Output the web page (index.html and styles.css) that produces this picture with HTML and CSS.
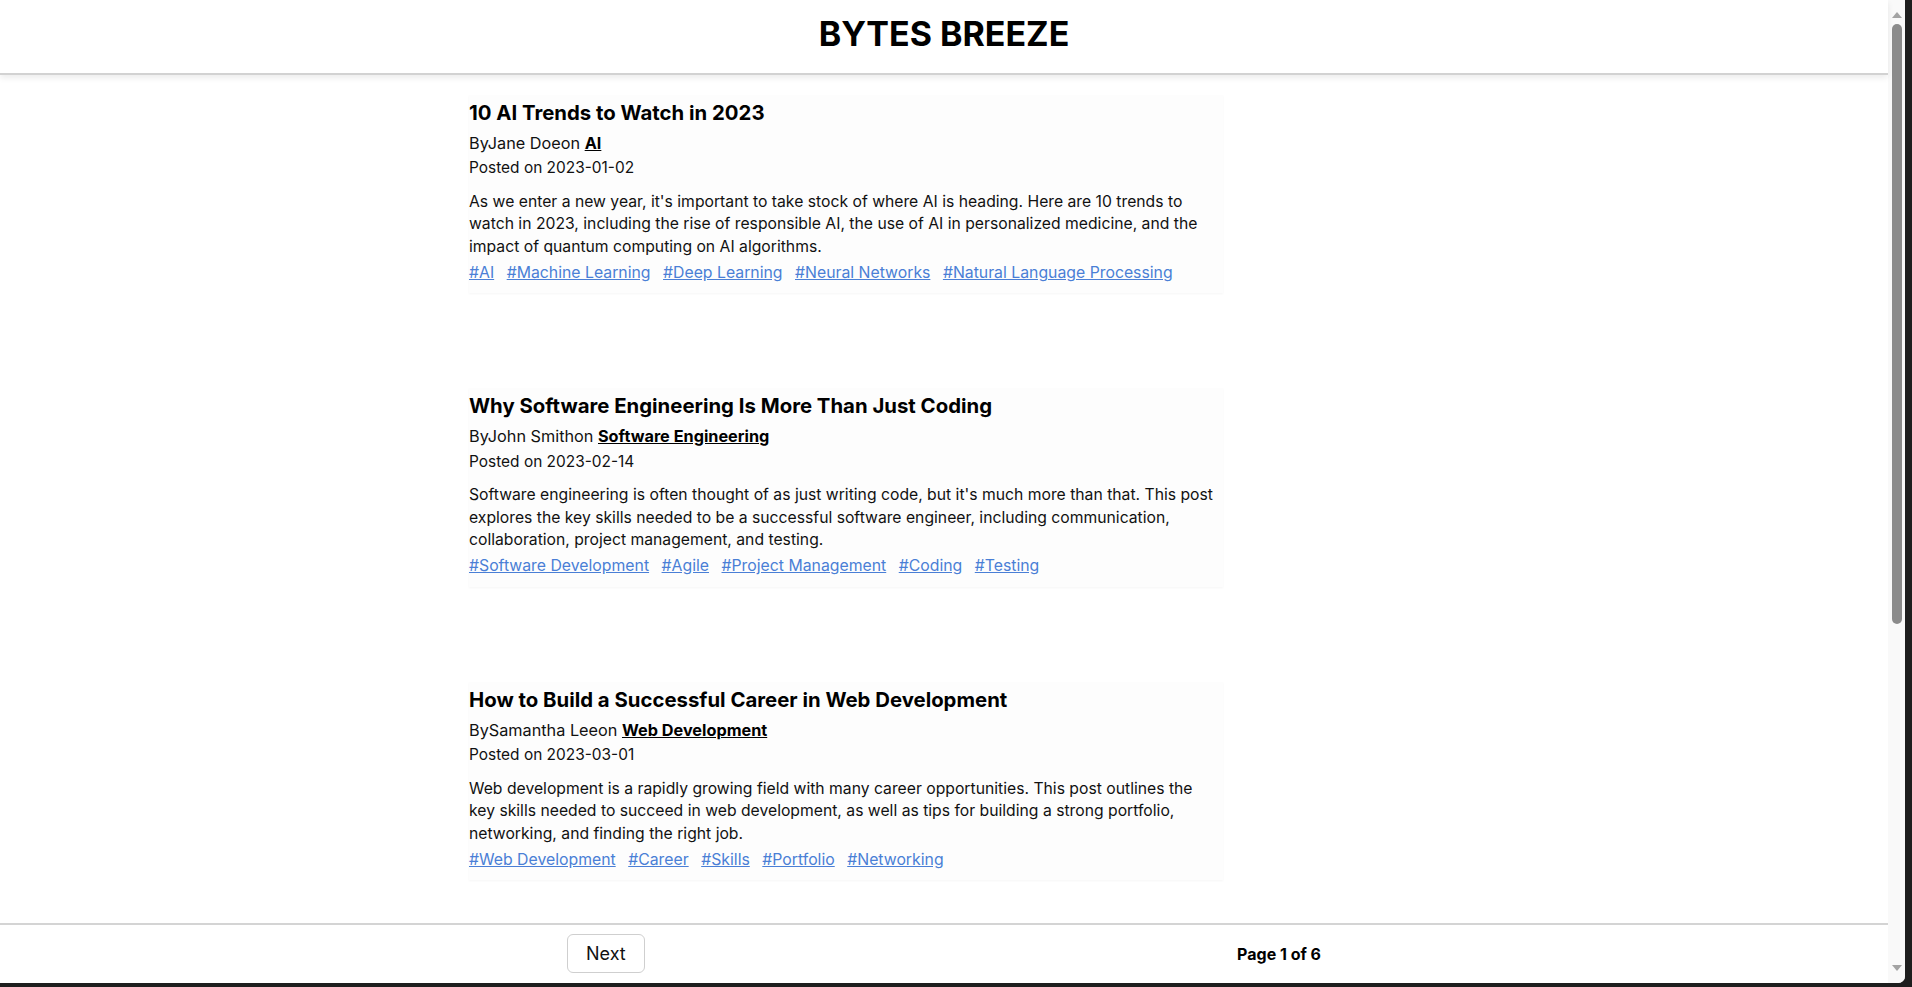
FILE: index.html
```html
<!DOCTYPE html>
<html lang="en">
<head>
<meta charset="utf-8">
<title>Bytes Breeze</title>
<link rel="stylesheet" href="styles.css">
</head>
<body>
<div class="window">
  <div class="page">
    <header class="site-header">
      <h1 class="site-title">BYTES BREEZE</h1>
    </header>
    <main class="posts">
      <article class="post">
        <h2 class="post-title">10 AI Trends to Watch in 2023</h2>
        <div class="post-meta">ByJane Doeon <a class="category" href="#">AI</a></div>
        <div class="post-date">Posted on 2023-01-02</div>
        <p class="post-body">As we enter a new year, it's important to take stock of where AI is heading. Here are 10 trends to watch in 2023, including the rise of responsible AI, the use of AI in personalized medicine, and the impact of quantum computing on AI algorithms.</p>
        <div class="tags">
          <a href="#">#AI</a>
          <a href="#">#Machine Learning</a>
          <a href="#">#Deep Learning</a>
          <a href="#">#Neural Networks</a>
          <a href="#">#Natural Language Processing</a>
        </div>
      </article>
      <article class="post">
        <h2 class="post-title">Why Software Engineering Is More Than Just Coding</h2>
        <div class="post-meta">ByJohn Smithon <a class="category" href="#">Software Engineering</a></div>
        <div class="post-date">Posted on 2023-02-14</div>
        <p class="post-body">Software engineering is often thought of as just writing code, but it's much more than that. This post explores the key skills needed to be a successful software engineer, including communication, collaboration, project management, and testing.</p>
        <div class="tags">
          <a href="#">#Software Development</a>
          <a href="#">#Agile</a>
          <a href="#">#Project Management</a>
          <a href="#">#Coding</a>
          <a href="#">#Testing</a>
        </div>
      </article>
      <article class="post">
        <h2 class="post-title">How to Build a Successful Career in Web Development</h2>
        <div class="post-meta">BySamantha Leeon <a class="category" href="#">Web Development</a></div>
        <div class="post-date">Posted on 2023-03-01</div>
        <p class="post-body">Web development is a rapidly growing field with many career opportunities. This post outlines the key skills needed to succeed in web development, as well as tips for building a strong portfolio, networking, and finding the right job.</p>
        <div class="tags">
          <a href="#">#Web Development</a>
          <a href="#">#Career</a>
          <a href="#">#Skills</a>
          <a href="#">#Portfolio</a>
          <a href="#">#Networking</a>
        </div>
      </article>
    </main>
    <footer class="pager">
      <div class="pager-inner">
        <button class="pager-btn" type="button">Next</button>
        <span class="pager-info">Page 1 of 6</span>
      </div>
    </footer>
  </div>
  <div class="scrollbar">
    <div class="sb-arrow sb-up"></div>
    <div class="sb-track"><div class="sb-thumb"></div></div>
    <div class="sb-arrow sb-down"></div>
  </div>
</div>
</body>
</html>
```
FILE: styles.css
```css
* { box-sizing: border-box; }

html, body {
  margin: 0;
  padding: 0;
  height: 100%;
  overflow: hidden;
}

body {
  background: #1e1e1e;
  font-family: Inter, "Noto Sans", "Liberation Sans", sans-serif;
  color: #111;
}

.window {
  width: 1905px;
  height: 983px;
  display: flex;
  background: #fff;
  border-bottom-right-radius: 7px;
  overflow: hidden;
}

.page {
  flex: 1;
  display: flex;
  flex-direction: column;
  min-width: 0;
}

.site-header {
  height: 75px;
  flex: none;
  padding-top: 14px;
  border-bottom: 2px solid #d2d2d2;
  box-shadow: 0 3px 6px rgba(0, 0, 0, 0.08);
  text-align: center;
  position: relative;
  z-index: 1;
  background: #fff;
}

.site-title {
  margin: 0;
  font-size: 34px;
  line-height: 40px;
  font-weight: 700;
  color: #000;
}

.posts {
  flex: 1;
  overflow: hidden;
  padding: 20px 0 0 469px;
  display: flex;
  flex-direction: column;
  gap: 95px;
}

.post {
  width: 754px;
  padding: 6px 5px 9px 0;
  background: #fdfdfd;
  box-shadow: 0 1px 2px rgba(0, 0, 0, 0.04);
  line-height: 22.4px;
}

.post-title {
  margin: 0 0 7px;
  font-size: 20.35px;
  line-height: 24px;
  font-weight: 700;
  color: #000;
}

.post-meta {
  font-size: 16.25px;
  color: #111;
}

.post-date {
  margin-top: 3px;
  font-size: 15.45px;
  color: #111;
}

.category {
  color: #000;
  font-weight: 700;
  text-decoration: underline;
}

.post-body {
  margin: 11px 0 4px;
  font-size: 15.72px;
  color: #111;
}

.tags {
  display: flex;
  flex-wrap: wrap;
  gap: 0 12.5px;
  font-size: 15.8px;
}

.tags a {
  color: #4a7fd6;
  text-decoration: underline;
}

.pager {
  height: 60px;
  flex: none;
  border-top: 2px solid #d4d4d4;
  padding-top: 9px;
  background: #fff;
}

.pager-inner {
  width: 754px;
  margin: 0 auto;
  display: flex;
  justify-content: space-between;
  align-items: center;
}

.pager-btn {
  height: 39px;
  padding: 0 18px;
  font-family: Inter, "Noto Sans", "Liberation Sans", sans-serif;
  font-size: 18px;
  color: #111;
  background: #fff;
  border: 1px solid #cfcfcf;
  border-radius: 6px;
}

.pager-info {
  font-size: 16px;
  font-weight: 700;
  color: #000;
}

.scrollbar {
  width: 17px;
  flex: none;
  background: #f9f9f9;
  display: flex;
  flex-direction: column;
  align-items: center;
}

.sb-arrow {
  width: 0;
  height: 0;
  border-left: 5px solid transparent;
  border-right: 5px solid transparent;
  flex: none;
}

.sb-up {
  margin-top: 12px;
  border-bottom: 6px solid #a3a3a3;
}

.sb-down {
  margin-bottom: 12px;
  border-top: 6px solid #a3a3a3;
}

.sb-track {
  flex: 1;
  width: 100%;
  display: flex;
  justify-content: center;
  padding-top: 6px;
}

.sb-thumb {
  width: 10px;
  height: 600px;
  background: #8b8b8b;
  border-radius: 5px;
}
```
